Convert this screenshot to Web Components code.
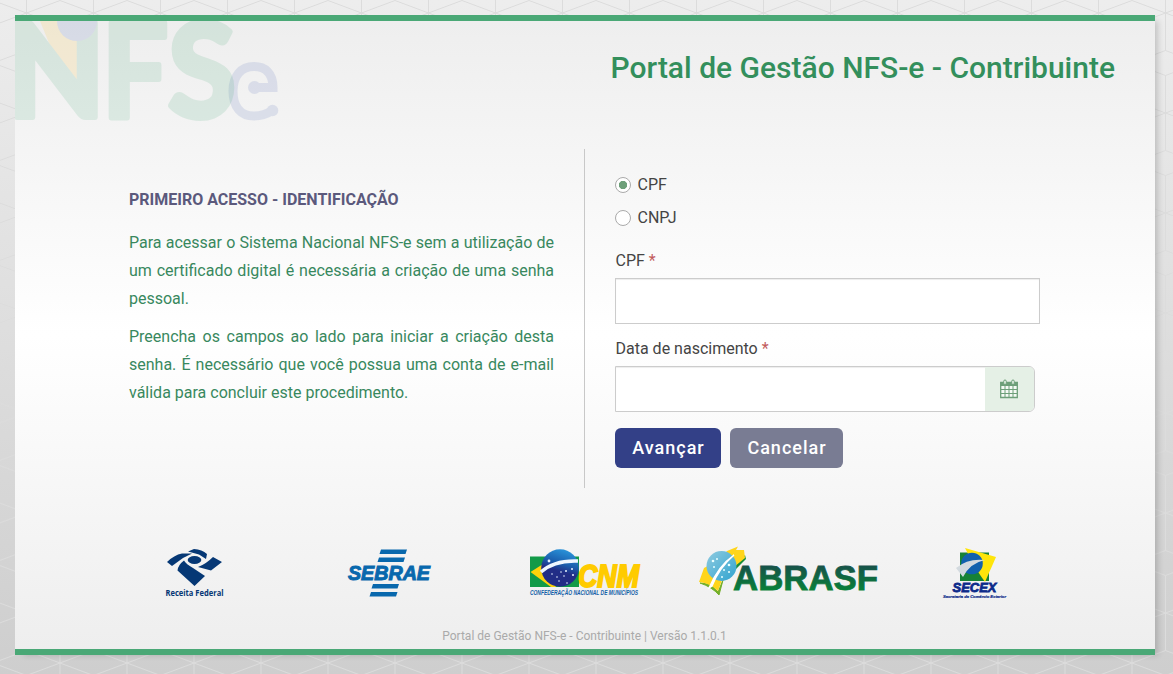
<!DOCTYPE html>
<html lang="pt-BR">
<head>
<meta charset="utf-8">
<title>Portal de Gestão NFS-e - Contribuinte</title>
<style>
html,body{margin:0;height:100%}
body{font-family:Roboto,"Liberation Sans",sans-serif;font-size:16px;overflow:hidden}
</style>
</head>
<body>
<portal-page>
  <portal-header slot="header">Portal de Gestão NFS-e - Contribuinte</portal-header>
  <access-intro slot="intro">
    <span slot="title">PRIMEIRO ACESSO - IDENTIFICAÇÃO</span>
    <p>Para acessar o Sistema Nacional NFS-e sem a utilização de um certificado digital é necessária a criação de uma senha pessoal.</p>
    <p>Preencha os campos ao lado para iniciar a criação desta senha. É necessário que você possua uma conta de e-mail válida para concluir este procedimento.</p>
  </access-intro>
  <access-form slot="form"></access-form>
  <partner-logos slot="partners"></partner-logos>
  <span slot="footer">Portal de Gestão NFS-e - Contribuinte | Versão 1.1.0.1</span>
</portal-page>
<script>
function define(name, html) {
  const t = document.createElement('template');
  t.innerHTML = html;
  customElements.define(name, class extends HTMLElement {
    constructor() {
      super();
      this.attachShadow({mode: 'open'}).appendChild(t.content.cloneNode(true));
    }
    connectedCallback() {
      if (name === 'radio-option' && this.hasAttribute('checked')) this.shadowRoot.querySelector('input').checked = true;
    }
  });
}

define('portal-page', `
<style>
:host{display:block;box-sizing:border-box;height:674px;padding:15px 18px 19px 15px;position:relative;background:linear-gradient(#ededed,#cecece)}
.pattern{position:absolute;inset:0;width:100%;height:100%}
.card{position:relative;box-sizing:border-box;height:640px;border:solid #4aa876;border-width:6px 0;background:linear-gradient(#eee,#fff 50%,#eee);box-shadow:6px 3px 6px -3px rgba(0,0,0,.17);display:grid;grid-template-rows:128px 339px 1fr 46px}
.columns{display:grid;grid-template-columns:570px 1fr}
.left{border-right:1px solid #c8c8c8;padding:37px 30px 0 114px}
.right{padding:24px 0 0 30px}
.foot{font-size:12px;color:#aaa;text-align:center;line-height:14px;padding:26px 1px 0 0}
</style>
<svg class="pattern"><defs><pattern id="p" width="67" height="100" patternUnits="userSpaceOnUse">
<path d="M26.500 0V50.500M26.500 75.500V100M60 25.500V100.500M-7 63L26.500 50.500L60 63L93.500 50.500M-7 63L26.500 75.500L60 63L93.500 75.500M-7 0.500L26.500 13L60 0.500L93.500 13M-7 25.500L26.500 13L60 25.500L93.500 13" fill="none" stroke="#dcdcdc"/>
</pattern></defs><rect width="100%" height="100%" fill="url(#p)"/></svg>
<div class="card">
  <slot name="header"></slot>
  <div class="columns"><div class="left"><slot name="intro"></slot></div><div class="right"><slot name="form"></slot></div></div>
  <slot name="partners"></slot>
  <div class="foot"><slot name="footer"></slot></div>
</div>`);

define('portal-header', `
<style>
:host{display:flex;justify-content:space-between;height:128px}
svg{flex:none}
h1{margin:29px 40px 0 0;font-weight:500;font-size:30px;line-height:36px;color:#338f5c;white-space:nowrap}
text{font-family:Lato,"Open Sans",sans-serif;font-weight:700}
</style>
<svg width="270" height="110" viewBox="15 21 270 110">
<g opacity=".14">
<path d="M40 21H79V92L53 53Z" fill="#ffbf21"/>
<g fill="#48a978" stroke="#48a978" stroke-width="6" stroke-linejoin="round">
<text x="7" y="117" font-size="130" textLength="98" lengthAdjust="spacingAndGlyphs">N</text>
<text x="102" y="117" font-size="130" textLength="66" lengthAdjust="spacingAndGlyphs">F</text></g>
<circle cx="77" cy="21" r="20" fill="#4c66b4"/></g>
<g opacity=".14"><g fill="none" stroke="#4c66b4" stroke-width="9"><path d="M255 87.500H273C273 73 265 66.500 254 66.500C241 66.500 233 76 233 91C233 107 241 116 254 116C262 116 267 114 273 110"/></g><circle cx="254.500" cy="87.500" r="6.500" fill="#4c66b4"/><circle cx="272.500" cy="110.500" r="5.800" fill="#4c66b4"/></g>
<g opacity=".15" fill="#48a978" stroke="#48a978" stroke-width="6" stroke-linejoin="round"><text x="168" y="117" font-size="130" textLength="68" lengthAdjust="spacingAndGlyphs">S</text></g>
</svg>
<h1><slot></slot></h1>`);

define('access-intro', `
<style>
:host{display:block;color:#38885e;line-height:28px;text-align:justify}
h2{margin:0 0 15px;font-size:16px;font-weight:700;line-height:28px;color:#5b597c;text-align:left;white-space:nowrap}
::slotted(p){margin:0 0 10px}
</style><h2><slot name="title"></slot></h2><slot></slot>`);

define('radio-option', `
<style>
:host{display:flex;align-items:center;height:23px;margin-bottom:10px;color:#444}
input{appearance:none;width:16px;height:16px;box-sizing:border-box;border:1px solid #aaa;border-radius:50%;margin:0 6.500px 0 0;background:#fff}
input:checked{background:radial-gradient(circle,#6d9f79 3.800px,#fff 4.500px)}
</style><input type="radio"><slot></slot>`);

define('form-field', `
<style>
:host{display:block;color:#444}
label{display:block;line-height:22px;margin:0 0 6px .5px}
label span{color:#c25b5b}
</style><label><slot name="label"></slot> <span>*</span></label><slot></slot>`);

define('text-box', `
<style>
:host{display:flex;box-sizing:border-box;width:425px;height:46px;border:1px solid #ccc;background:#fff;box-shadow:inset 0 1px 1px rgba(0,0,0,.075);overflow:hidden}
input{flex:1;min-width:0;border:0;outline:0;background:transparent;padding:0 12px}
</style><input type="text"><slot></slot>`);

define('calendar-button', `
<style>
:host{display:flex;box-sizing:border-box;align-items:center;justify-content:center;width:49px;padding-right:2px;background:#e5f0e6}
</style>
<svg width="18" height="20" viewBox="0 0 18 20"><path d="M.700 3.500H17.300V18.500H.700Z" fill="#f5faf5" stroke="#6d9f79" stroke-width="1.300"/><path d="M.500 3H17.500V7H.500Z" fill="#6d9f79"/><path d="M5 7V18M9 7V18M13 7V18M1 10.500H17M1 14.500H17" stroke="#6d9f79"/><rect x="3.700" y="1" width="2.600" height="4.500" rx="1.300" fill="#e5f0e6" stroke="#6d9f79"/><rect x="11.700" y="1" width="2.600" height="4.500" rx="1.300" fill="#e5f0e6" stroke="#6d9f79"/></svg>`);

define('action-button', `
<style>
:host{display:block}
button{display:block;height:40px;width:var(--w);padding:0 0 0 1px;border:0;border-radius:6px;background:var(--bg);color:#fff;font:500 18px/40px Roboto,"Liberation Sans",sans-serif;letter-spacing:1px}
</style><button><slot></slot></button>`);

define('access-form', `
<style>
:host{display:block}
.first{margin-top:21px}
.second{margin-top:14px}
.date{width:420px;border-radius:0 6px 6px 0}
.actions{display:flex;gap:9px;margin-top:16px}
</style>
<radio-option checked>CPF</radio-option>
<radio-option>CNPJ</radio-option>
<form-field class="first"><span slot="label">CPF</span><text-box></text-box></form-field>
<form-field class="second"><span slot="label">Data de nascimento</span><text-box class="date"><calendar-button></calendar-button></text-box></form-field>
<div class="actions"><action-button style="--w:106px;--bg:#334087">Avançar</action-button><action-button style="--w:113px;--bg:#797c93">Cancelar</action-button></div>`);

define('partner-logos', `
<style>
:host{display:grid;grid-template-columns:184px 182px 170px 244px 70px;align-items:start;padding:54px 0 0 145px;box-sizing:border-box;height:115px}
svg{display:block;overflow:visible}
text{font-family:"Liberation Sans",sans-serif;font-weight:700}
</style>
<svg width="70" height="60" viewBox="160 542 70 60">
<g fill="#063875"><path d="M167 562Q174 555 182 553.500L192 553.500L183 558L172 566Z"/><path d="M188 551.500L194 549Q202 549.500 207 554L206 559L199 554.500Z"/><ellipse cx="194.500" cy="560" rx="6.800" ry="4"/><path d="M184 560.500Q186 564 193 568L205 576L194.500 586L177.500 570.500Q178 565 184 560.500Z"/><path d="M198 567Q206 564 213 557L222 562L211 570.500Z"/></g>
<text x="165.500" y="595.500" font-size="8.600" textLength="58" lengthAdjust="spacingAndGlyphs" fill="#063875" style="font-family:'Open Sans'">Receita Federal</text></svg>
<svg width="90" height="60" viewBox="344 542 90 60">
<g fill="#0868ad"><path d="M381 549.500H407L405.500 554H379.500ZM379 557.500H405L403.500 562H377.500ZM373 584H399L397.500 588.500H371.500ZM371 592H397.500L396 596.500H369.500Z"/>
<text x="348" y="580" font-size="20.500" textLength="82" lengthAdjust="spacingAndGlyphs" stroke="#0868ad" stroke-width="1" font-style="italic">SEBRAE</text></g></svg>
<svg width="116" height="60" viewBox="526 542 116 60">
<defs><linearGradient id="g" x1=".7" y1="0" x2=".4" y2="1"><stop stop-color="#2b97dc"/><stop offset=".4" stop-color="#1a5cac"/><stop offset=".6" stop-color="#222d86"/><stop offset="1" stop-color="#222d86"/></linearGradient></defs>
<path d="M530 556.500H579V587H530Z" fill="#129a48"/><path d="M530.500 572L551 559L577 572L555 587H551Z" fill="#ffd20a"/>
<text x="578" y="587" font-size="30.500" textLength="61" lengthAdjust="spacingAndGlyphs" font-style="italic" fill="#ffcb00" stroke="#ffcb00" stroke-width="2">CNM</text>
<circle cx="560" cy="568" r="18.800" fill="url(#g)"/><path d="M529.500 572" /><path d="M541 572Q554 560 578 561" fill="none" stroke="#eef6ff" stroke-width="3.500"/>
<g fill="#e7f1ff"><circle cx="549" cy="561" r="1.400"/><circle cx="561" cy="572" r=".8"/><circle cx="552" cy="574" r=".8"/><circle cx="557" cy="577" r=".8"/><circle cx="566" cy="571" r="1"/><circle cx="572" cy="569" r="1"/><circle cx="564" cy="576" r=".8"/><circle cx="573" cy="575" r="1"/><circle cx="559" cy="581" r=".8"/><circle cx="567" cy="583" r=".8"/></g>
<text x="530" y="595" font-size="6.300" textLength="108" lengthAdjust="spacingAndGlyphs" font-style="italic" fill="#1160a7">CONFEDERAÇÃO NACIONAL DE MUNICÍPIOS</text></svg>
<svg width="184" height="60" viewBox="696 542 184 60">
<defs><linearGradient id="a" x1="0" x2="0" y1="0" y2="1"><stop offset=".15" stop-color="#17504a"/><stop offset=".85" stop-color="#078238"/></linearGradient><linearGradient id="b" x1="0" x2="1" y1="0" y2="1"><stop stop-color="#8fcbe0"/><stop offset="1" stop-color="#2fa3cf"/></linearGradient></defs>
<path d="M735 565L745 555L746 559L734 571Z" fill="#198d37"/><path d="M700 583Q712 587 719 595L723 580L718 592Q711 583 700 583Z" fill="#73af28" stroke="#73af28" stroke-width="1"/>
<path d="M704 568L699 582Q710 583 718 591L722 580L734 567L745 558L744 550H736L738 546.500L727 551L719 560Z" fill="#ffd51b"/>
<circle cx="721.500" cy="566" r="15" fill="url(#b)"/><path d="M709 588Q718 566 734 555Q719 568 712 586Z" fill="#fff" stroke="#fff" stroke-width="1.400"/>
<g fill="#e9ffff"><circle cx="713" cy="561" r="1.300"/><circle cx="717" cy="559" r="1"/><circle cx="714" cy="567" r="1"/><circle cx="729" cy="565" r="1.300"/><circle cx="724" cy="570" r="1"/><circle cx="729" cy="572" r="1"/><circle cx="722" cy="577" r="1"/></g>
<text x="733" y="590" font-size="34.500" textLength="145" lengthAdjust="spacingAndGlyphs" fill="url(#a)" stroke="url(#a)" stroke-width=".8">ABRASF</text></svg>
<svg width="70" height="60" viewBox="940 542 70 60">
<path d="M960 552.500H989V581H960Z" fill="#168235"/><path d="M965 548L996 557L985 582Q976 570 965 548Z" fill="#ffe50a"/>
<circle cx="972" cy="563.500" r="10.800" fill="#1161ad"/><path d="M956 568Q968 558 985 560Q970 563 963 577Z" fill="#d3dadf"/>
<text x="952.500" y="592" font-size="13.500" textLength="44" lengthAdjust="spacingAndGlyphs" font-style="italic" fill="#0c2a8a" stroke="#0c2a8a" stroke-width=".8">SECEX</text>
<text x="943" y="598" font-size="4.300" textLength="63" lengthAdjust="spacingAndGlyphs" font-style="italic" fill="#0c2a8a" stroke="#0c2a8a" stroke-width=".2">Secretaria de Comércio Exterior</text></svg>`);
</script>
</body>
</html>
